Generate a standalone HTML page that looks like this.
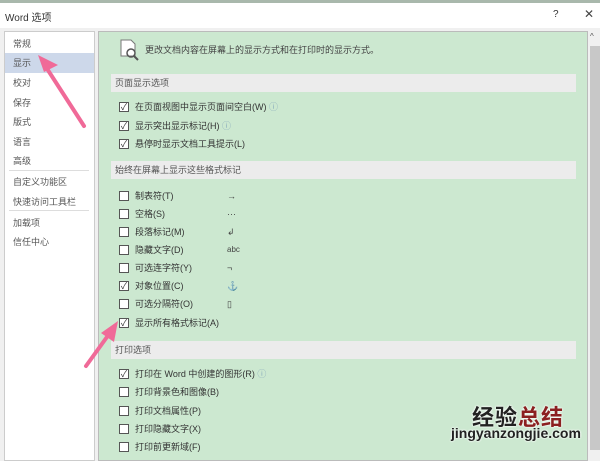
<!DOCTYPE html>
<html><head><meta charset="utf-8"><style>
*{margin:0;padding:0;box-sizing:border-box}
body{width:600px;height:450px;overflow:hidden;background:#f0f0f0;font-family:"Liberation Sans","Noto Sans CJK SC",sans-serif;font-size:9px;color:#333;position:relative}
.a{position:absolute}
.nav{left:4px;top:31px;width:91px;height:430px;background:#fff;border:1px solid #ccc}
.nav div{position:absolute;left:8px;color:#555}
.main{left:98px;top:31px;width:490px;height:430px;background:#cce8d0;border:1px solid #bbb}
.hdr{position:absolute;left:12px;width:465px;height:18px;background:#ececec;color:#555;padding-left:4px;line-height:18px}
.row{position:absolute;left:20px;height:12px;line-height:12px;color:#333}
.cb{display:inline-block;width:10px;height:10px;border:1px solid #555;background:#fff;vertical-align:middle;margin-right:6px;position:relative;top:-1px;font-size:9px;line-height:8px;text-align:center}
.sym{position:absolute;left:108px;top:0;color:#444}
</style></head><body>
<div class="a" style="left:0;top:0;width:600px;height:3px;background:#a9b8ac"></div>
<div class="a" style="left:0;top:3px;width:600px;height:25px;background:#fff"></div>
<div class="a" style="left:5px;top:9px;font-size:10px;color:#333">Word 选项</div>
<div class="a" style="left:553px;top:9px;font-size:10px">?</div>
<div class="a" style="left:584px;top:7px;font-size:12px;color:#444">✕</div>
<div class="a nav">
<div style="top:5px">常规</div>
<div style="left:0;top:21px;width:89px;height:20px;background:#cdd8ea"></div>
<div style="top:24px">显示</div>
<div style="top:44px">校对</div>
<div style="top:64px">保存</div>
<div style="top:83px">版式</div>
<div style="top:103px">语言</div>
<div style="top:122px">高级</div>
<div style="left:4px;top:138px;width:80px;height:1px;background:#ddd"></div>
<div style="top:143px">自定义功能区</div>
<div style="top:163px">快速访问工具栏</div>
<div style="left:4px;top:178px;width:80px;height:1px;background:#ddd"></div>
<div style="top:184px">加载项</div>
<div style="top:203px">信任中心</div>
</div>
<div class="a main">
<svg class="a" style="left:20px;top:6px" width="20" height="24"><path d="M2 2h10l4 4v12H2z" fill="#fff" stroke="#777"/><circle cx="12" cy="15" r="4" fill="none" stroke="#555" stroke-width="1.5"/><path d="M15 18l4 4" stroke="#555" stroke-width="2"/></svg>
<div class="a" style="left:46px;top:11px;color:#444">更改文档内容在屏幕上的显示方式和在打印时的显示方式。</div>
<div class="hdr" style="top:42px">页面显示选项</div>
<div class="row" style="top:69px"><span class="cb">✓</span>在页面视图中显示页面间空白(W) <span style="color:#8ab">ⓘ</span></div>
<div class="row" style="top:88px"><span class="cb">✓</span>显示突出显示标记(H) <span style="color:#8ab">ⓘ</span></div>
<div class="row" style="top:106px"><span class="cb">✓</span>悬停时显示文档工具提示(L)</div>
<div class="hdr" style="top:129px">始终在屏幕上显示这些格式标记</div>
<div class="row" style="top:158px"><span class="cb"></span>制表符(T)<span class="sym">→</span></div>
<div class="row" style="top:176px"><span class="cb"></span>空格(S)<span class="sym">···</span></div>
<div class="row" style="top:194px"><span class="cb"></span>段落标记(M)<span class="sym">↲</span></div>
<div class="row" style="top:212px"><span class="cb"></span>隐藏文字(D)<span class="sym" style="font-size:8px">abc</span></div>
<div class="row" style="top:230px"><span class="cb"></span>可选连字符(Y)<span class="sym">¬</span></div>
<div class="row" style="top:248px"><span class="cb">✓</span>对象位置(C)<span class="sym" style="font-weight:bold">⚓</span></div>
<div class="row" style="top:266px"><span class="cb"></span>可选分隔符(O)<span class="sym">▯</span></div>
<div class="row" style="top:285px"><span class="cb">✓</span>显示所有格式标记(A)</div>
<div class="hdr" style="top:309px">打印选项</div>
<div class="row" style="top:336px"><span class="cb">✓</span>打印在 Word 中创建的图形(R) <span style="color:#8ab">ⓘ</span></div>
<div class="row" style="top:354px"><span class="cb"></span>打印背景色和图像(B)</div>
<div class="row" style="top:373px"><span class="cb"></span>打印文档属性(P)</div>
<div class="row" style="top:391px"><span class="cb"></span>打印隐藏文字(X)</div>
<div class="row" style="top:409px"><span class="cb"></span>打印前更新域(F)</div>
</div>
<div class="a" style="left:588px;top:31px;width:12px;height:419px;background:#f0f0f0"></div>
<div class="a" style="left:590px;top:46px;width:10px;height:404px;background:#c8c8c8"></div>
<div class="a" style="left:590px;top:32px;font-size:8px;color:#555">^</div>
<svg class="a" style="left:0;top:0" width="600" height="450">
<path d="M84 126L44 64" stroke="#f06a98" stroke-width="4" stroke-linecap="round"/>
<path d="M38 55L58 65L44 72z" fill="#f06a98"/>
<path d="M86 366L112 330" stroke="#f06a98" stroke-width="4" stroke-linecap="round"/>
<path d="M118 321L114 342L101 333z" fill="#f06a98"/>
</svg>
<div class="a" style="left:472px;top:400px;font-size:22px;font-weight:bold;color:#222;letter-spacing:1px;text-shadow:0 0 2px #fff,0 0 2px #fff">经验<span style="color:#8b2020">总结</span></div>
<div class="a" style="left:451px;top:425px;font-size:14px;font-weight:bold;color:#222;text-shadow:0 0 2px #fff,0 0 2px #fff">jingyanzongjie.com</div>
</body></html>
